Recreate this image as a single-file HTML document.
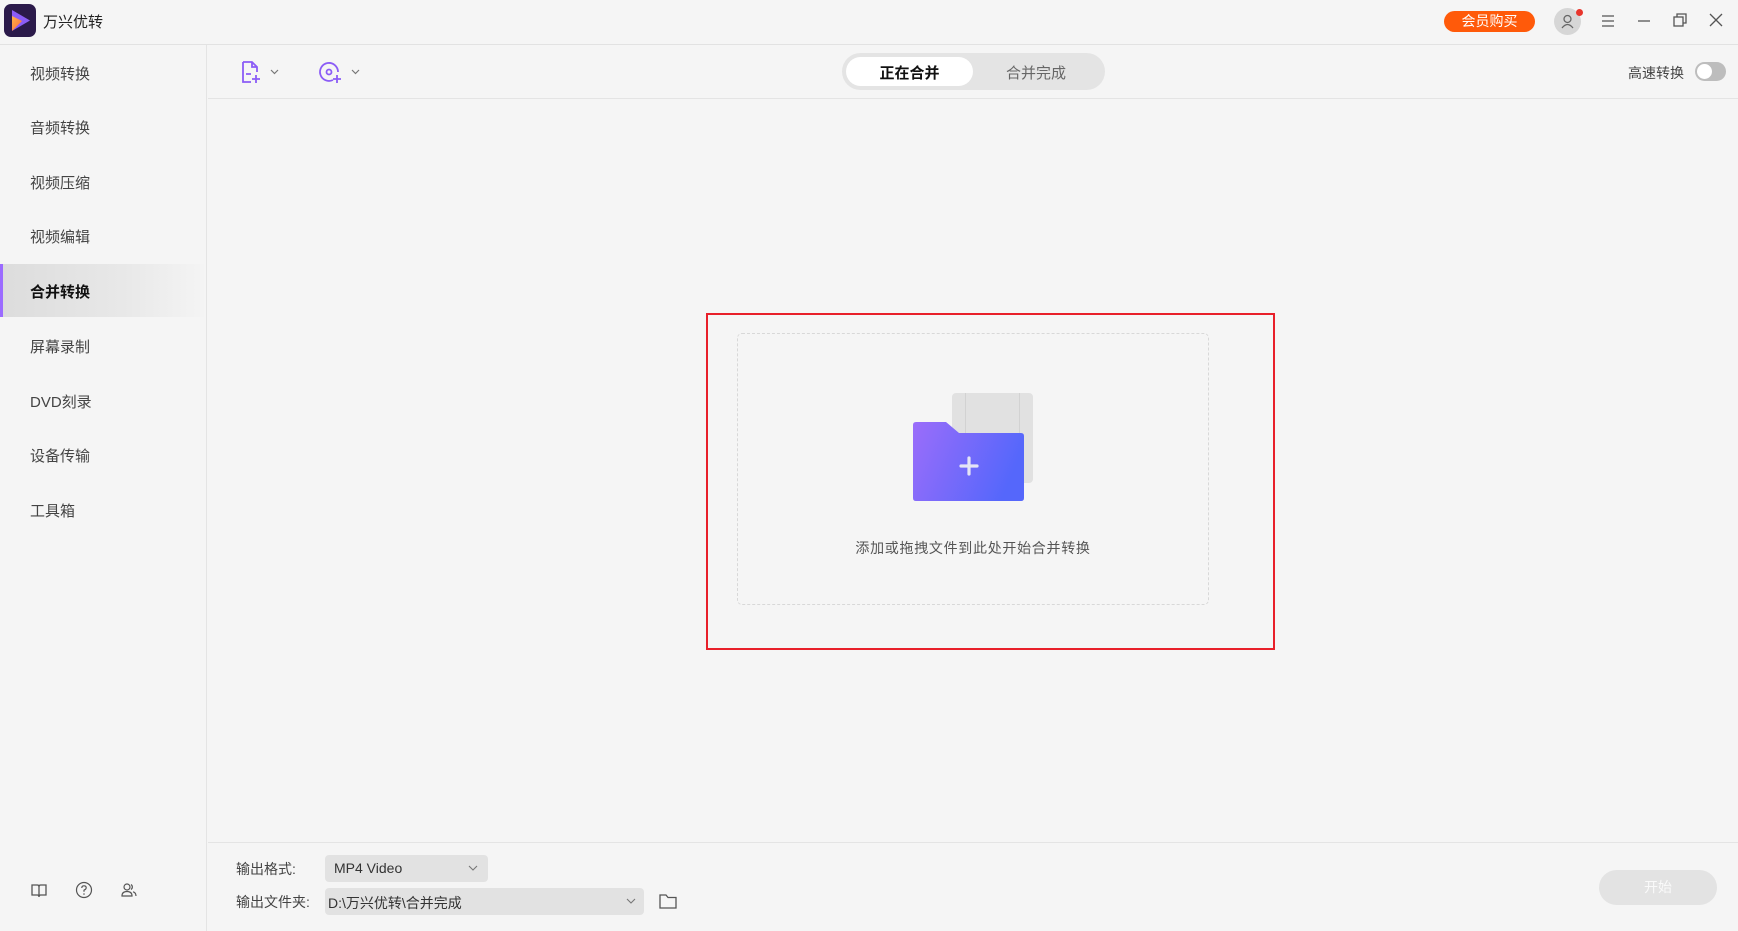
<!DOCTYPE html>
<html><head><meta charset="utf-8"><style>
*{margin:0;padding:0;box-sizing:border-box}
body{width:1738px;height:931px;background:#f5f5f5;font-family:"Liberation Sans","Noto Sans CJK SC",sans-serif;position:relative;overflow:hidden;color:#333}
.a{position:absolute}
.side{left:0;top:45px;width:207px;height:886px;border-right:1px solid #e4e4e4;background:#f5f5f5}
.it{position:absolute;left:30px;font-size:15px;color:#444;line-height:20px}
.t{white-space:nowrap}
</style></head><body>
<!-- title bar -->
<div class="a" style="left:0;top:44px;width:1738px;height:1px;background:#e2e2e2"></div>
<div class="a" style="left:4px;top:4px;width:32px;height:33px;border-radius:7px;background:#2b1a4a">
<svg width="32" height="33" viewBox="0 0 32 33"><defs><linearGradient id="lg" x1="0" y1="0" x2="1" y2="1"><stop offset="0" stop-color="#ffb347"/><stop offset="1" stop-color="#ff6a3d"/></linearGradient></defs><path d="M8 6 L26 16.5 L8 27 Z" fill="#8b5cf6"/><path d="M8 12 L18 17 L8 27 Z" fill="url(#lg)"/></svg></div>
<div class="a t" style="left:43px;top:11px;font-size:15px;color:#222">万兴优转</div>
<div class="a t" style="left:1444px;top:11px;width:91px;height:21px;border-radius:11px;background:#ff5a0a;color:#fff;font-size:14px;text-align:center;line-height:21px">会员购买</div>
<div class="a" style="left:1554px;top:8px;width:27px;height:27px;border-radius:50%;background:#d6d6d6">
<svg width="27" height="27" viewBox="0 0 27 27"><circle cx="13.5" cy="11" r="3.5" fill="none" stroke="#666" stroke-width="1.3"/><path d="M8 20 Q13.5 13 19 20" fill="none" stroke="#666" stroke-width="1.3"/></svg></div>
<div class="a" style="left:1576px;top:9px;width:7px;height:7px;border-radius:50%;background:#e8352c"></div>
<svg class="a" style="left:1600px;top:14px" width="16" height="14"><path d="M2 2H14M2 7H14M2 12H14" stroke="#555" stroke-width="1.3"/></svg>
<svg class="a" style="left:1636px;top:14px" width="16" height="14"><path d="M2 7H14" stroke="#555" stroke-width="1.3"/></svg>
<svg class="a" style="left:1672px;top:12px" width="16" height="16"><rect x="2" y="5" width="9" height="9" fill="none" stroke="#555" stroke-width="1.3"/><path d="M5 5V2H14V11H11" fill="none" stroke="#555" stroke-width="1.3"/></svg>
<svg class="a" style="left:1709px;top:13px" width="14" height="14"><path d="M1 1L13 13M13 1L1 13" stroke="#555" stroke-width="1.3"/></svg>
<!-- sidebar -->
<div class="a side"></div>
<div class="a" style="left:0;top:264px;width:204px;height:53px;background:linear-gradient(90deg,#dcdcdc,#e8e8e8 60%,#f4f4f4)"></div>
<div class="a" style="left:0;top:264px;width:3px;height:53px;background:#9b6bff"></div>
<div class="it t" style="top:65px">视频转换</div>
<div class="it t" style="top:119px">音频转换</div>
<div class="it t" style="top:174px">视频压缩</div>
<div class="it t" style="top:228px">视频编辑</div>
<div class="it t" style="top:283px;font-weight:bold;color:#111">合并转换</div>
<div class="it t" style="top:338px">屏幕录制</div>
<div class="it t" style="top:393px">DVD刻录</div>
<div class="it t" style="top:447px">设备传输</div>
<div class="it t" style="top:502px">工具箱</div>
<svg class="a" style="left:30px;top:882px" width="18" height="18"><path d="M2 3H7.5Q9 3 9 5V15Q9 13 7.5 13H2ZM16 3H10.5Q9 3 9 5V15Q9 13 10.5 13H16Z" fill="none" stroke="#555" stroke-width="1.3"/></svg>
<svg class="a" style="left:75px;top:881px" width="18" height="18"><circle cx="9" cy="9" r="7.5" fill="none" stroke="#555" stroke-width="1.2"/><path d="M6.8 7Q6.8 4.8 9 4.8Q11.2 4.8 11.2 6.8Q11.2 8.2 9 9.2V10.8" fill="none" stroke="#555" stroke-width="1.2"/><circle cx="9" cy="13" r=".8" fill="#555"/></svg>
<svg class="a" style="left:120px;top:881px" width="18" height="18"><circle cx="7" cy="6" r="3" fill="none" stroke="#555" stroke-width="1.2"/><path d="M2 15Q2 10.5 7 10.5Q12 10.5 12 15Z" fill="none" stroke="#555" stroke-width="1.2"/><path d="M11 3.5A3 3 0 0 1 11 8.5M13 10.8Q16 11.5 16 15" fill="none" stroke="#555" stroke-width="1.2"/></svg>
<!-- toolbar -->
<div class="a" style="left:208px;top:98px;width:1530px;height:1px;background:#e4e4e4"></div>
<svg class="a" style="left:240px;top:60px" width="44" height="26"><path d="M3 2H12L17 7V12M3 2V22H11M12 2V7H17M6 14H11" fill="none" stroke="#8b5cf6" stroke-width="1.8"/><path d="M16 15V23M12 19H20" stroke="#8b5cf6" stroke-width="1.8"/><path d="M31 10L34.5 13.5L38 10" fill="none" stroke="#777" stroke-width="1.2"/></svg>
<svg class="a" style="left:318px;top:60px" width="46" height="26"><path d="M15 20A9 9 0 1 1 20 12" fill="none" stroke="#8b5cf6" stroke-width="1.8"/><circle cx="11" cy="12" r="2.5" fill="none" stroke="#8b5cf6" stroke-width="1.8"/><path d="M19 15V23M15 19H23" stroke="#8b5cf6" stroke-width="1.8"/><path d="M34 10L37.5 13.5L41 10" fill="none" stroke="#777" stroke-width="1.2"/></svg>
<div class="a" style="left:842px;top:53px;width:263px;height:37px;border-radius:19px;background:#e4e4e4"></div>
<div class="a" style="left:846px;top:57px;width:127px;height:29px;border-radius:15px;background:#fff"></div>
<div class="a t" style="left:846px;top:62px;width:127px;text-align:center;font-size:15px;font-weight:bold;color:#111">正在合并</div>
<div class="a t" style="left:976px;top:62px;width:120px;text-align:center;font-size:15px;color:#666">合并完成</div>
<div class="a t" style="left:1628px;top:63px;font-size:14px;color:#444">高速转换</div>
<div class="a" style="left:1695px;top:62px;width:31px;height:19px;border-radius:10px;background:#bdbdbd"></div>
<div class="a" style="left:1697px;top:64px;width:15px;height:15px;border-radius:50%;background:#fff"></div>
<!-- drop area -->
<div class="a" style="left:706px;top:313px;width:569px;height:337px;border:2px solid #e8202a"></div>
<div class="a" style="left:737px;top:333px;width:472px;height:272px;border:1.5px dashed #d8d8d8;border-radius:5px"></div>
<div class="a" style="left:952px;top:393px;width:81px;height:90px;border-radius:4px;background:#e1e1e1"></div>
<div class="a" style="left:965px;top:393px;width:1px;height:90px;background:#d2d2d2"></div>
<div class="a" style="left:1019px;top:393px;width:1px;height:90px;background:#d2d2d2"></div>
<svg class="a" style="left:913px;top:422px" width="112" height="80"><defs><linearGradient id="fg" x1="0" y1="0" x2="1" y2="0.3"><stop offset="0" stop-color="#9b6dfa"/><stop offset="1" stop-color="#5567fb"/></linearGradient></defs><path d="M3 0H33L46 11H108Q111 11 111 14V76Q111 79 108 79H3Q0 79 0 76V3Q0 0 3 0Z" fill="url(#fg)"/><path d="M56 36V52M48 44H64" stroke="#e4e4f5" stroke-width="3.2" stroke-linecap="round"/></svg>
<div class="a t" style="left:763px;top:538px;width:420px;text-align:center;font-size:14px;letter-spacing:0.7px;color:#555">添加或拖拽文件到此处开始合并转换</div>
<!-- bottom -->
<div class="a" style="left:208px;top:842px;width:1530px;height:1px;background:#e4e4e4"></div>
<div class="a t" style="left:236px;top:859px;font-size:14px;color:#444">输出格式:</div>
<div class="a" style="left:325px;top:855px;width:163px;height:27px;border-radius:4px;background:#e2e2e2"></div>
<div class="a t" style="left:334px;top:860px;font-size:14px;color:#333">MP4 Video</div>
<svg class="a" style="left:468px;top:864px" width="10" height="8"><path d="M1 2L5 6L9 2" fill="none" stroke="#777" stroke-width="1.1"/></svg>
<div class="a t" style="left:236px;top:892px;font-size:14px;color:#444">输出文件夹:</div>
<div class="a" style="left:325px;top:888px;width:319px;height:27px;border-radius:4px;background:#e2e2e2"></div>
<div class="a t" style="left:328px;top:893px;font-size:14px;color:#333">D:\万兴优转\合并完成</div>
<svg class="a" style="left:626px;top:897px" width="10" height="8"><path d="M1 2L5 6L9 2" fill="none" stroke="#777" stroke-width="1.1"/></svg>
<svg class="a" style="left:658px;top:892px" width="20" height="18"><path d="M2 3H8L10 5.5H18V16H2Z" fill="none" stroke="#555" stroke-width="1.3"/></svg>
<div class="a t" style="left:1599px;top:870px;width:118px;height:35px;border-radius:18px;background:#e3e3e3;color:#fafafa;font-size:14px;text-align:center;line-height:35px">开始</div>
</body></html>
